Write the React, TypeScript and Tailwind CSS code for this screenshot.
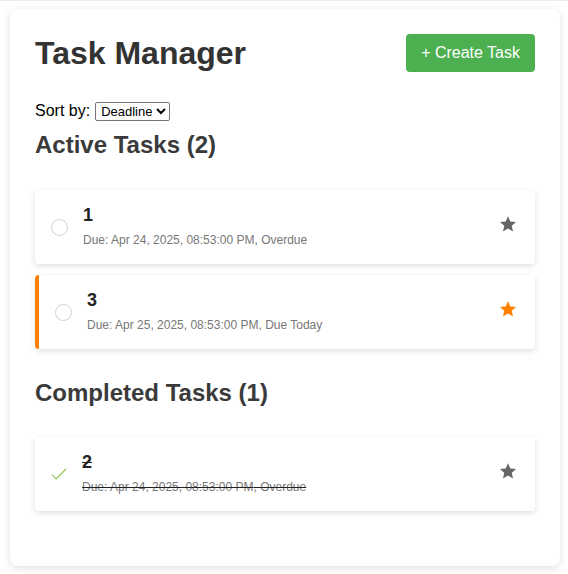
import { useState } from 'react'

interface Task {
  id: number
  title: string
  due: string
  status: string
  starred: boolean
  dueToday?: boolean
}

const ACTIVE: Task[] = [
  { id: 1, title: '1', due: 'Apr 24, 2025, 08:53:00 PM', status: 'Overdue', starred: false },
  { id: 3, title: '3', due: 'Apr 25, 2025, 08:53:00 PM', status: 'Due Today', starred: true, dueToday: true },
]

const COMPLETED: Task[] = [
  { id: 2, title: '2', due: 'Apr 24, 2025, 08:53:00 PM', status: 'Overdue', starred: false },
]

export default function App() {
  const [sort, setSort] = useState('deadline')

  return (
    <div className="min-h-[574px] bg-white border-t border-[#ececec] pt-[8px] pl-[10px] font-['Liberation_Sans',Arial,sans-serif] text-[#333]">
      <div className="w-[550px] bg-white rounded-lg shadow-[0_2px_8px_rgba(0,0,0,0.12)] px-[25px] pt-[25px] pb-[55px]">
        {/* Header */}
        <div className="flex items-center justify-between">
          <h1 className="text-[32px] font-bold leading-[37px] text-[#333]">Task Manager</h1>
          <button className="h-[38px] px-[15px] rounded-[4px] bg-[#4caf50] text-white text-[16px]">
            + Create Task
          </button>
        </div>

        {/* Sort */}
        <div className="mt-[27px] flex items-center text-[16px] text-black">
          <span>Sort by:</span>
          <select
            value={sort}
            onChange={(e) => setSort(e.target.value)}
            className="ml-[5px] w-[75px] h-[19px] border border-[#767676] rounded-[2px] text-[13px] leading-none px-[1px] font-['Liberation_Sans',Arial,sans-serif]"
          >
            <option value="deadline">Deadline</option>
            <option value="priority">Priority</option>
          </select>
        </div>

        <h2 className="mt-[8px] text-[24px] font-bold leading-[28px] text-[#3a3a3a]">
          Active Tasks ({ACTIVE.length})
        </h2>
        <div className="mt-[31px] flex flex-col gap-[11px]">
          {ACTIVE.map((task) => (
            <TaskCard key={task.id} task={task} />
          ))}
        </div>

        <h2 className="mt-[30px] text-[24px] font-bold leading-[28px] text-[#3a3a3a]">
          Completed Tasks ({COMPLETED.length})
        </h2>
        <div className="mt-[30px] flex flex-col gap-[11px]">
          {COMPLETED.map((task) => (
            <TaskCard key={task.id} task={task} done />
          ))}
        </div>
      </div>
    </div>
  )
}

function TaskCard({ task, done }: { task: Task; done?: boolean }) {
  return (
    <div
      className={`h-[74px] flex items-center bg-white rounded-[4px] shadow-[0_2px_6px_rgba(0,0,0,0.13)] pl-[16px] pr-[18px] ${
        task.dueToday ? 'border-l-4 border-[#ff7f00]' : ''
      }`}
    >
      {done ? (
        <span className="w-[16px] flex justify-center text-[#8bc34a]">
          <CheckIcon />
        </span>
      ) : (
        <span className="w-[17px] h-[17px] rounded-full border border-[#cfcfd6] bg-white" />
      )}
      <div className={`ml-[15px] flex-1 -mt-[3px] ${done ? 'line-through decoration-[#222]' : ''}`}>
        <div className="text-[18px] font-bold leading-[21px] text-[#222]">{task.title}</div>
        <div className="mt-[7px] text-[12px] leading-[14px] text-[#777]">
          Due: {task.due}, {task.status}
        </div>
      </div>
      <span className="-mt-[6px]">
        <StarIcon color={task.starred ? '#ff7f00' : '#666666'} />
      </span>
    </div>
  )
}

function StarIcon({ color }: { color: string }) {
  return (
    <svg width="18" height="18" viewBox="0 0 24 24" fill={color} className="block">
      <path d="M12 1.5l3.1 7.1 7.7.7-5.8 5.1 1.7 7.6L12 18l-6.7 4 1.7-7.6-5.8-5.1 7.7-.7z" />
    </svg>
  )
}

function CheckIcon() {
  return (
    <svg width="16" height="12" viewBox="0 0 16 12" fill="none" stroke="currentColor" strokeWidth={1.1}>
      <path d="M1 6.5l4 4.5L15 1" />
    </svg>
  )
}
